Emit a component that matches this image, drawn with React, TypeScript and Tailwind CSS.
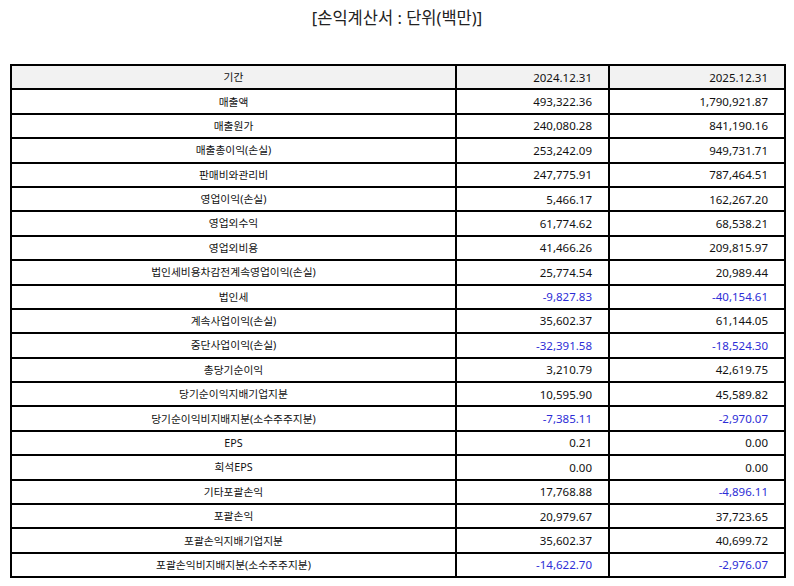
import React from "react";

type Row = { label: string; a: string; b: string };

const rows: Row[] = [
  { label: "매출액", a: "493,322.36", b: "1,790,921.87" },
  { label: "매출원가", a: "240,080.28", b: "841,190.16" },
  { label: "매출총이익(손실)", a: "253,242.09", b: "949,731.71" },
  { label: "판매비와관리비", a: "247,775.91", b: "787,464.51" },
  { label: "영업이익(손실)", a: "5,466.17", b: "162,267.20" },
  { label: "영업외수익", a: "61,774.62", b: "68,538.21" },
  { label: "영업외비용", a: "41,466.26", b: "209,815.97" },
  { label: "법인세비용차감전계속영업이익(손실)", a: "25,774.54", b: "20,989.44" },
  { label: "법인세", a: "-9,827.83", b: "-40,154.61" },
  { label: "계속사업이익(손실)", a: "35,602.37", b: "61,144.05" },
  { label: "중단사업이익(손실)", a: "-32,391.58", b: "-18,524.30" },
  { label: "총당기순이익", a: "3,210.79", b: "42,619.75" },
  { label: "당기순이익지배기업지분", a: "10,595.90", b: "45,589.82" },
  { label: "당기순이익비지배지분(소수주주지분)", a: "-7,385.11", b: "-2,970.07" },
  { label: "EPS", a: "0.21", b: "0.00" },
  { label: "희석EPS", a: "0.00", b: "0.00" },
  { label: "기타포괄손익", a: "17,768.88", b: "-4,896.11" },
  { label: "포괄손익", a: "20,979.67", b: "37,723.65" },
  { label: "포괄손익지배기업지분", a: "35,602.37", b: "40,699.72" },
  { label: "포괄손익비지배지분(소수주주지분)", a: "-14,622.70", b: "-2,976.07" },
];

// negative values are shown in blue
const numCls = (v: string) =>
  v.startsWith("-") ? "text-[#2d2dd6]" : "text-[#111]";

const App = () => {
  return (
    <div className="w-[794px] h-[586px] bg-white px-[10px] pt-[6px] font-['Noto_Sans','Noto_Sans_CJK_KR',sans-serif] text-[#111]">
      <h1 className="text-center text-[16.5px] leading-[24px] font-normal text-[#222]">
        [손익계산서 : 단위(백만)]
      </h1>

      <table className="mt-[34px] w-[774px] border-collapse table-fixed">
        <colgroup>
          <col className="w-[445px]" />
          <col className="w-[153px]" />
          <col className="w-[176px]" />
        </colgroup>
        <thead>
          <tr className="h-[24.4px] bg-[#f2f2f2]">
            <th className="border-2 border-black font-normal text-center text-[10.75px]">기간</th>
            <th className="border-2 border-black font-normal text-right pr-4 text-[11.5px]">2024.12.31</th>
            <th className="border-2 border-black font-normal text-right pr-4 text-[11.5px]">2025.12.31</th>
          </tr>
        </thead>
        <tbody>
          {rows.map((r) => (
            <tr key={r.label} className="h-[24.4px]">
              <td className="border-2 border-black text-center text-[10.75px]">{r.label}</td>
              <td className={"border-2 border-black text-right pr-4 text-[11.5px] " + numCls(r.a)}>{r.a}</td>
              <td className={"border-2 border-black text-right pr-4 text-[11.5px] " + numCls(r.b)}>{r.b}</td>
            </tr>
          ))}
        </tbody>
      </table>
    </div>
  );
};

export default App;
